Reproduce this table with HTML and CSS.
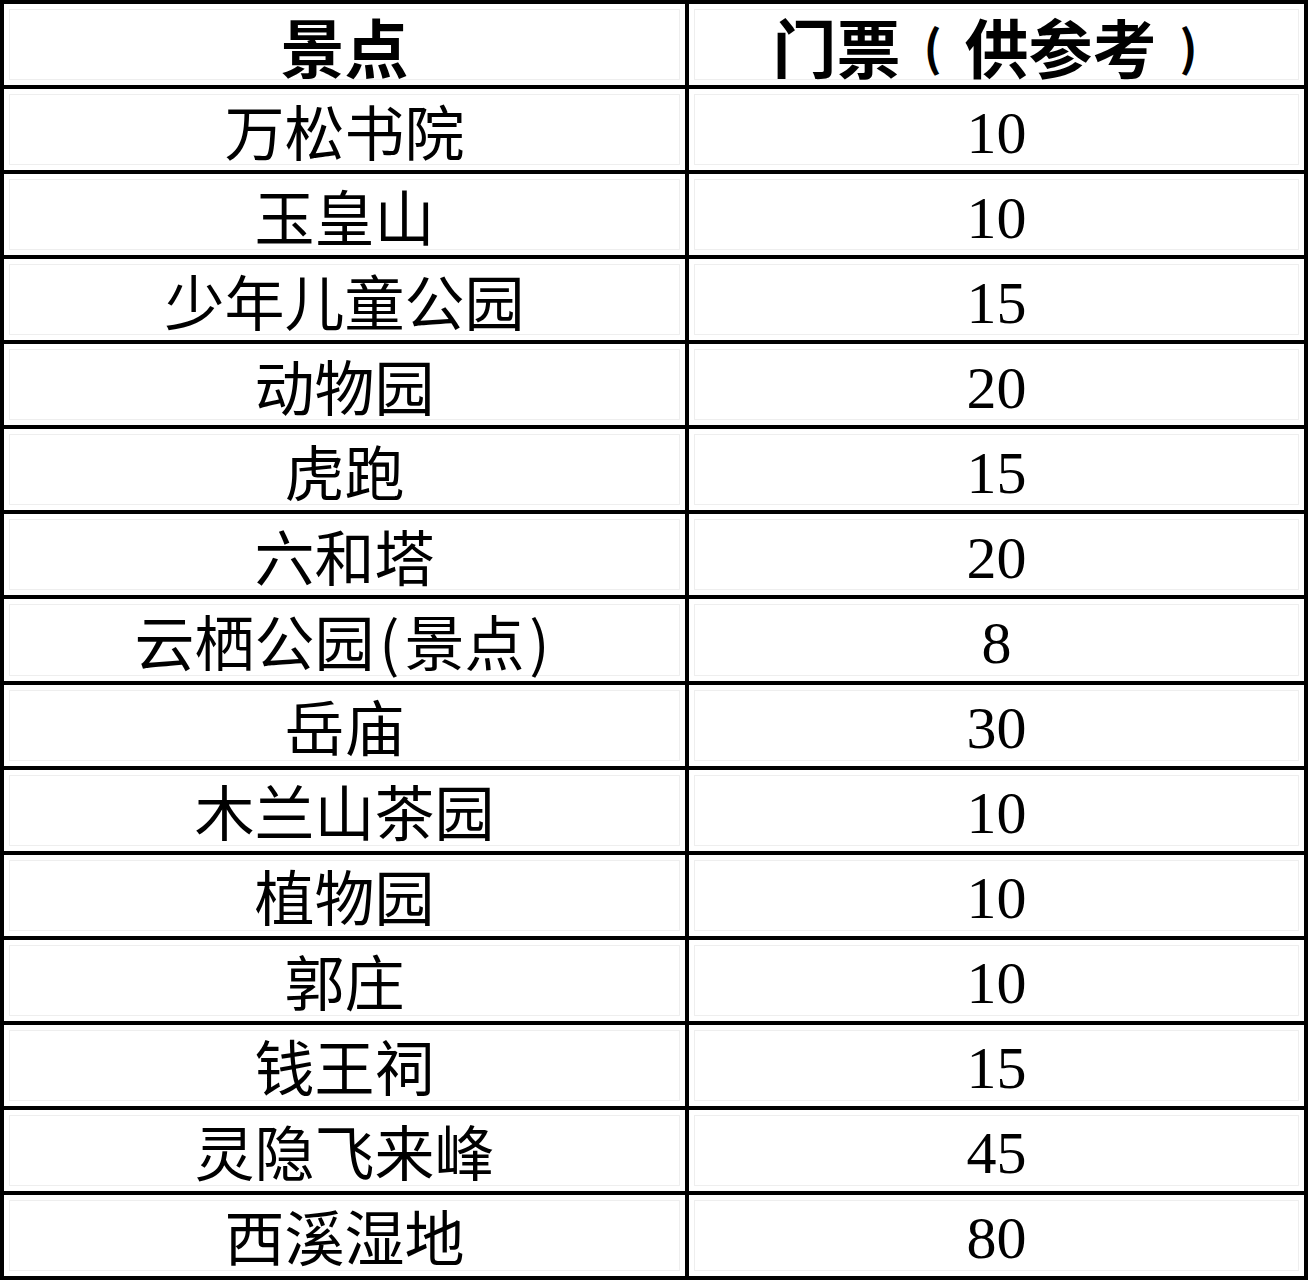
FILE: index.html
```html
<!DOCTYPE html>
<html lang="zh-CN">
<head>
<meta charset="utf-8">
<title>景点门票</title>
<link rel="stylesheet" href="styles.css">
</head>
<body>
<div class="sheet">
  <div class="cell head name">景点</div>
  <div class="cell head price">门票<span class="fw">(</span>供参考<span class="fw">)</span></div>

  <div class="cell name">万松书院</div><div class="cell num">10</div>
  <div class="cell name">玉皇山</div><div class="cell num">10</div>
  <div class="cell name">少年儿童公园</div><div class="cell num">15</div>
  <div class="cell name">动物园</div><div class="cell num">20</div>
  <div class="cell name">虎跑</div><div class="cell num">15</div>
  <div class="cell name">六和塔</div><div class="cell num">20</div>
  <div class="cell name">云栖公园<span class="hw">(</span>景点<span class="hw">)</span></div><div class="cell num">8</div>
  <div class="cell name">岳庙</div><div class="cell num">30</div>
  <div class="cell name">木兰山茶园</div><div class="cell num">10</div>
  <div class="cell name">植物园</div><div class="cell num">10</div>
  <div class="cell name">郭庄</div><div class="cell num">10</div>
  <div class="cell name">钱王祠</div><div class="cell num">15</div>
  <div class="cell name">灵隐飞来峰</div><div class="cell num">45</div>
  <div class="cell name">西溪湿地</div><div class="cell num">80</div>
</div>
</body>
</html>
```

FILE: styles.css
```css
html, body {
  margin: 0;
  padding: 0;
  background: #fff;
}

.sheet {
  box-sizing: border-box;
  width: 1308px;
  height: 1280px;
  padding: 4px;
  background: #000;
  display: grid;
  grid-template-columns: 681px 615px;
  grid-template-rows: repeat(15, 1fr);
  gap: 4px;
}

.cell {
  background: #fff;
  display: flex;
  align-items: center;
  justify-content: center;
  color: #000;
  font-family: "Noto Sans CJK SC", "Noto Sans", sans-serif;
  font-size: 60px;
  line-height: 1;
  box-shadow: inset 0 0 0 5px #fff, inset 0 0 0 6px #eeeeee;
  white-space: nowrap;
}

.head {
  font-weight: 700;
  font-size: 64px;
}

.fw {
  display: inline-block;
  width: 64px;
  font-size: 48px;
  text-align: center;
  font-weight: 700;
}

.hw {
  display: inline-block;
  width: 0.5em;
  text-align: center;
  font-weight: 400;
}

.num {
  font-family: "Liberation Serif", "DejaVu Serif", serif;
  font-size: 60px;
  padding-top: 6px;
}
```
